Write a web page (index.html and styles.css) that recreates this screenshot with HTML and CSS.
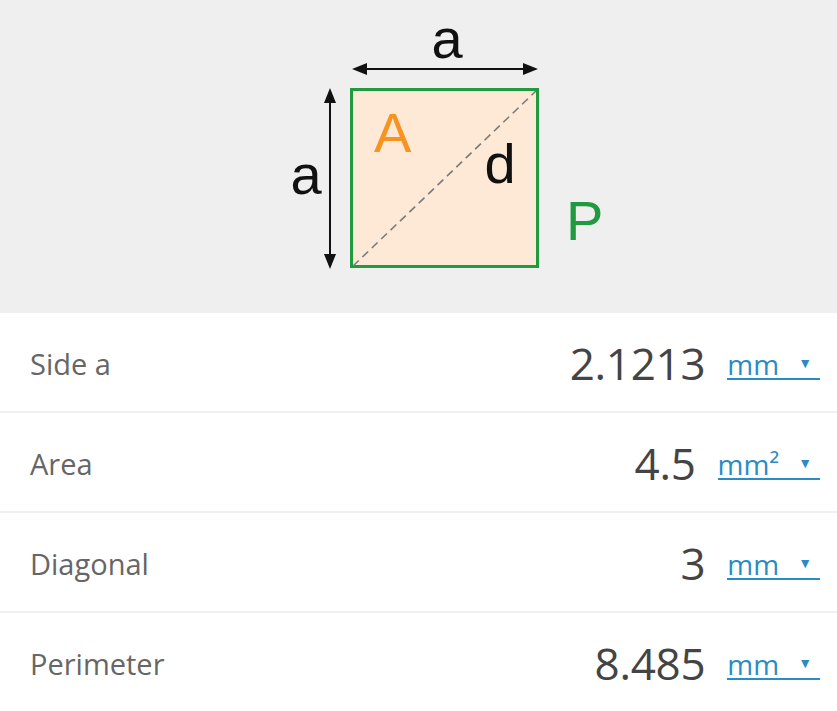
FILE: index.html
```html
<!DOCTYPE html>
<html>
<head>
<meta charset="utf-8">
<link rel="stylesheet" href="styles.css">
</head>
<body>
<div class="figure">
  <svg class="diagram" width="837" height="313" viewBox="0 0 837 313" xmlns="http://www.w3.org/2000/svg">
    <rect x="351.5" y="89.5" width="186" height="177" fill="#fde9d6" stroke="#1f9a3f" stroke-width="3"/>
    <line x1="353" y1="266" x2="536" y2="91" stroke="#7a7a7a" stroke-width="1.6" stroke-dasharray="8 5"/>
    <line x1="364" y1="69" x2="526" y2="69" stroke="#111" stroke-width="2"/>
    <polygon points="352,69 367,63 367,75" fill="#111"/>
    <polygon points="538,69 523,63 523,75" fill="#111"/>
    <line x1="330" y1="100" x2="330" y2="257" stroke="#111" stroke-width="2"/>
    <polygon points="330,88 324,103 336,103" fill="#111"/>
    <polygon points="330,269 324,254 336,254" fill="#111"/>
    <text x="447" y="58" class="lbl" text-anchor="middle">a</text>
    <text x="306" y="194" class="lbl" text-anchor="middle">a</text>
    <text x="374" y="152" class="lbl area">A</text>
    <text x="500" y="183" class="lbl" text-anchor="middle">d</text>
    <text x="566" y="240" class="lbl per">P</text>
  </svg>
</div>
<div class="rows">
  <div class="row">
    <span class="label">Side a</span>
    <span class="value">2.1213</span>
    <span class="unit">mm<span class="caret">▼</span></span>
  </div>
  <div class="row">
    <span class="label">Area</span>
    <span class="value">4.5</span>
    <span class="unit">mm²<span class="caret">▼</span></span>
  </div>
  <div class="row">
    <span class="label">Diagonal</span>
    <span class="value">3</span>
    <span class="unit">mm<span class="caret">▼</span></span>
  </div>
  <div class="row">
    <span class="label">Perimeter</span>
    <span class="value">8.485</span>
    <span class="unit">mm<span class="caret">▼</span></span>
  </div>
</div>
</body>
</html>
```
FILE: styles.css
```css
html, body {
  margin: 0;
  padding: 0;
  background: #ffffff;
}
body {
  font-family: "Open Sans", "Noto Sans", sans-serif;
  width: 837px;
  overflow: hidden;
}
.figure {
  background: #efefef;
  height: 313px;
}
.diagram {
  display: block;
}
.lbl {
  font-family: "Liberation Sans", Arial, sans-serif;
  font-size: 56px;
  fill: #111;
}
.lbl.area {
  fill: #f7931e;
}
.lbl.per {
  fill: #1f9a3f;
}
.rows {
  display: flex;
  flex-direction: column;
}
.row {
  height: 98px;
  border-bottom: 2px solid #f0f0f0;
  display: flex;
  align-items: center;
  padding: 0 17px 0 30px;
}
.label {
  flex: 1;
  font-size: 29px;
  color: #666;
  margin-top: 2px;
}
.value {
  font-size: 44px;
  color: #444;
  margin-right: 22px;
  letter-spacing: -0.3px;
  margin-top: 2px;
}
.unit {
  display: inline-flex;
  align-items: baseline;
  font-size: 28px;
  line-height: 1;
  color: #2a8cc4;
  border-bottom: 2px solid #2a8cc4;
  margin-top: 6px;
}
.caret {
  font-size: 14px;
  margin-left: 19px;
  padding-right: 8px;
  position: relative;
  top: -7px;
}
```
